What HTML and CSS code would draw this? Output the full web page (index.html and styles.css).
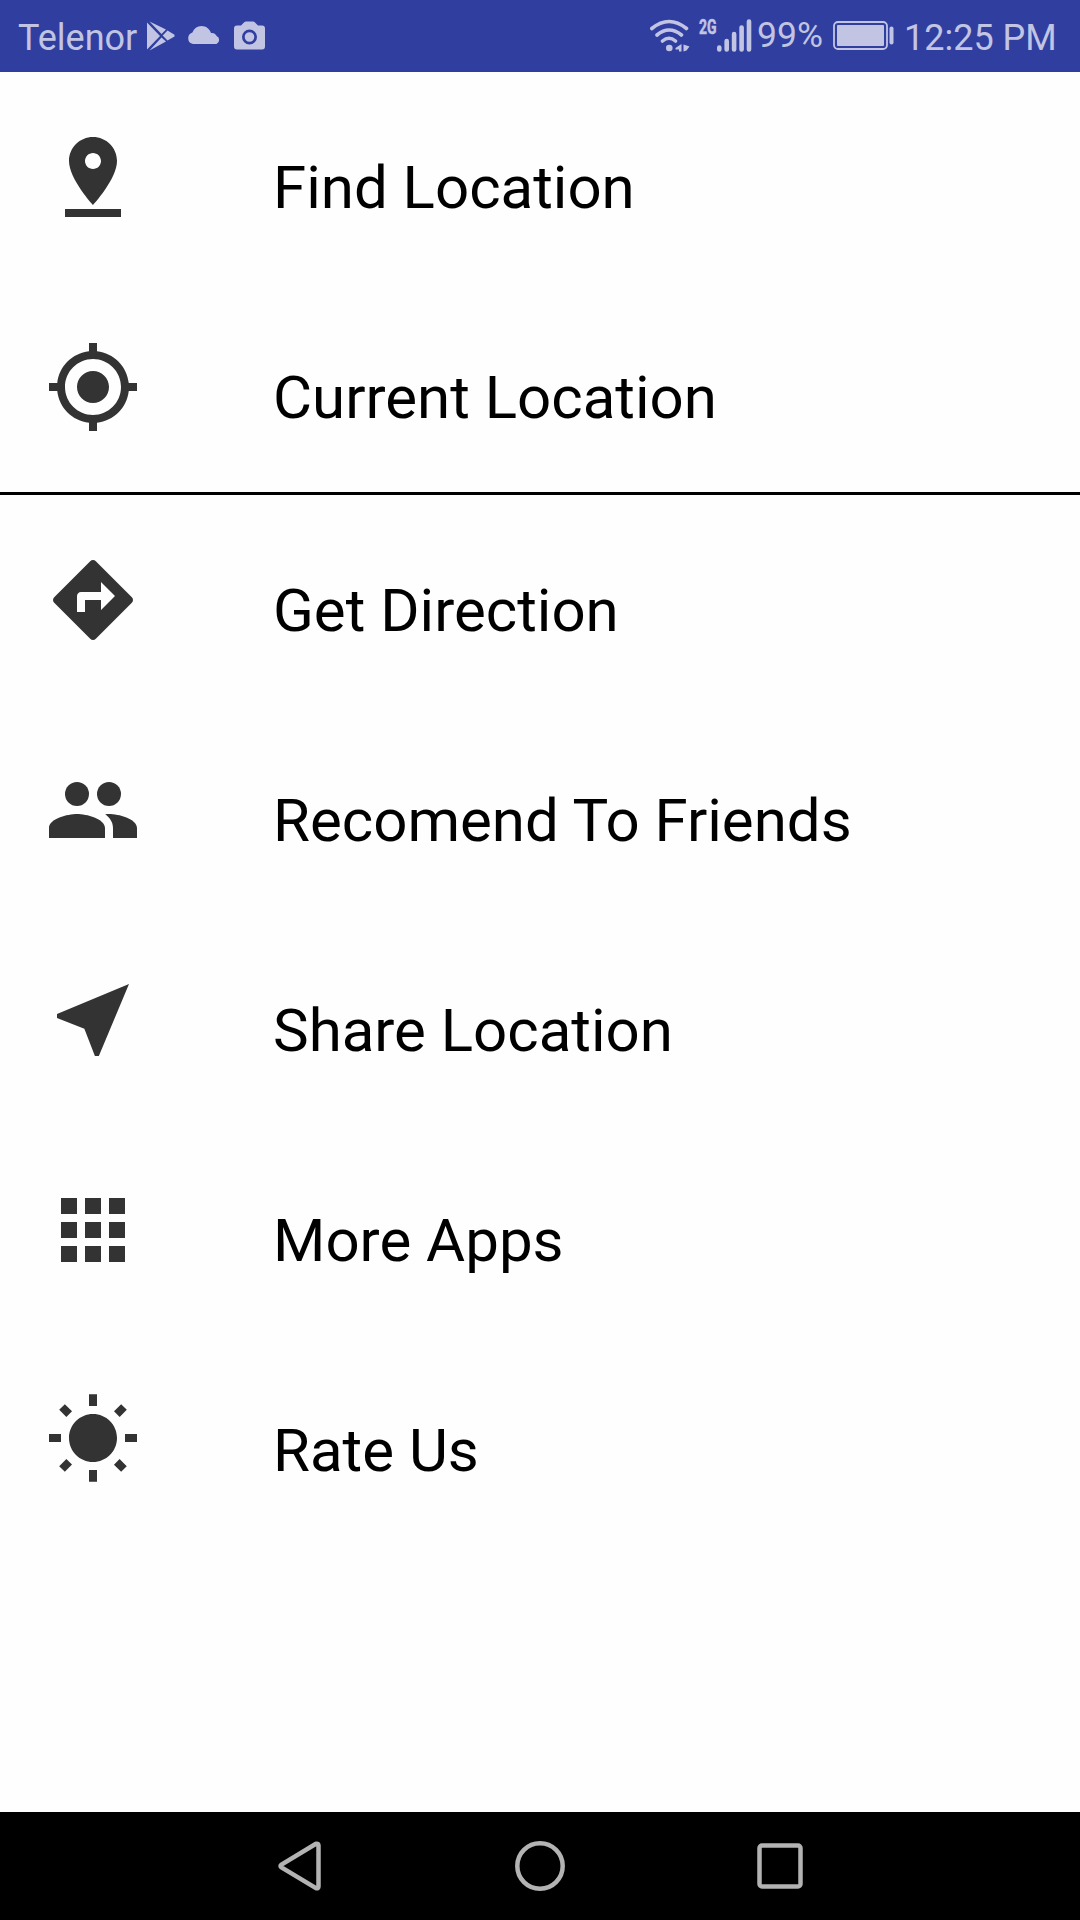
FILE: index.html
```
<!DOCTYPE html>
<html lang="en">
<head>
<meta charset="utf-8">
<title>Menu</title>
<link rel="stylesheet" href="styles.css">
</head>
<body>
<header class="status">
  <span class="carrier">Telenor</span>
  <svg class="ic-play" width="28" height="30" viewBox="0 0 28 30"><path d="M0 1.500V28.500L13 15ZM2.500 0.500L14.500 13 19 8.500ZM20.500 9.500L15.700 14.500 20.500 19.500 27.500 15.500V13.800ZM2.500 29.500L14.500 16.500 19 20.500Z"/></svg>
  <svg class="ic-cloud" width="34" height="20" viewBox="0 0 34 20"><path d="M6 19a6 6 0 0 1-.6-11.600A10 10 0 0 1 14.500 1c4.500 0 8.200 2.800 9.500 7l1-.1c2.500.1 4 1.300 4.600 3.200A4.300 4.300 0 0 1 29.500 19Z"/></svg>
  <svg class="ic-camera" width="31" height="29" viewBox="0 0 31 29"><path fill-rule="evenodd" d="M3 4.500H7L10 1.500Q11 .5 12 .5H19Q20 .5 21 1.500L24 4.500H28Q31 4.500 31 7.500V25.500Q31 28.500 28 28.500H3Q0 28.500 0 25.500V7.500Q0 4.500 3 4.500ZM15.500 8.500a7.500 7.500 0 1 0 0 15 7.500 7.500 0 0 0 0-15ZM15.500 11.200a4.800 4.800 0 1 1 0 9.600 4.800 4.800 0 0 1 0-9.600Z"/></svg>
  <svg class="ic-wifi" width="40" height="33" viewBox="0 0 40 33"><g fill="none" stroke="currentColor" stroke-width="3.600" stroke-linecap="round"><path d="M1.800 9.500Q19 -4.500 36.500 9.500M7 16Q19 6 31.500 16M12.500 22Q19 16.500 25.500 22"/></g><circle cx="19.300" cy="29" r="3.300"/><path d="M31.500 25V32.500H29V30.500H25.500V29ZM33.500 25.500L39.500 27.500 36.500 31.500 33.500 32.500Z"/></svg>
  <span class="net">2G</span>
  <svg class="ic-signal" width="35" height="33" viewBox="0 0 35 33"><g stroke="currentColor" stroke-width="4.600" stroke-linecap="round"><path d="M2.300 28.500V30.500M9.700 22V30.500M17.100 15V30.500M24.600 8.500V30.500M32 2.500V30.500"/></g></svg>
  <span class="percent">99%</span>
  <svg class="ic-battery" width="62" height="29" viewBox="0 0 62 29"><rect x="1" y="1" width="53" height="27" rx="4" fill="none" stroke="currentColor" stroke-width="1.800"/><rect x="4" y="4" width="47" height="21" rx="1"/><rect x="56.500" y="5.500" width="4" height="18" rx="2"/></svg>
  <span class="clock">12:25 PM</span>
</header>

<main class="menu">
  <div class="row">
    <svg class="icon" viewBox="0 0 24 24"><path d="M18 8c0-3.310-2.690-6-6-6S6 4.690 6 8c0 4.500 6 11 6 11s6-6.500 6-11zm-8 0c0-1.100.9-2 2-2s2 .9 2 2-.890 2-2 2c-1.100 0-2-.9-2-2zM5 20v2h14v-2H5z"/></svg>
    <span class="label">Find Location</span>
  </div>
  <div class="row">
    <svg class="icon" viewBox="0 0 24 24"><path d="M12 8c-2.210 0-4 1.790-4 4s1.790 4 4 4 4-1.790 4-4-1.790-4-4-4zm8.940 3c-.46-4.170-3.770-7.480-7.940-7.940V1h-2v2.060C6.830 3.520 3.520 6.830 3.060 11H1v2h2.060c.46 4.170 3.770 7.480 7.940 7.940V23h2v-2.060c4.170-.46 7.480-3.770 7.940-7.940H23v-2h-2.060zM12 19c-3.870 0-7-3.130-7-7s3.130-7 7-7 7 3.130 7 7-3.130 7-7 7z"/></svg>
    <span class="label">Current Location</span>
  </div>
  <div class="divider"></div>
  <div class="row">
    <svg class="icon" viewBox="0 0 24 24"><path d="M21.710 11.290l-9-9c-.39-.39-1.020-.39-1.410 0l-9 9c-.39.39-.39 1.020 0 1.410l9 9c.39.39 1.020.39 1.410 0l9-9c.39-.38.39-1.010 0-1.410zM14 14.500V12h-4v3H8v-4c0-.55.45-1 1-1h5V7.500l3.500 3.500-3.500 3.500z"/></svg>
    <span class="label">Get Direction</span>
  </div>
  <div class="row">
    <svg class="icon" viewBox="0 0 24 24"><circle cx="8" cy="8" r="3"/><circle cx="16" cy="8" r="3"/><path d="M8 13c-2.330 0-7 1.170-7 3.500V19h14v-2.500c0-2.330-4.670-3.500-7-3.500zm8 0c-.29 0-.62.020-.97.050 1.160.84 1.970 1.970 1.970 3.450V19h6v-2.500c0-2.330-4.670-3.500-7-3.500z"/></svg>
    <span class="label">Recomend To Friends</span>
  </div>
  <div class="row">
    <svg class="icon" viewBox="0 0 24 24"><path d="M21 3L3 10.530v.98l6.840 2.650L12.480 21h.98L21 3z"/></svg>
    <span class="label">Share Location</span>
  </div>
  <div class="row">
    <svg class="icon" viewBox="0 0 24 24"><path d="M4 8h4V4H4v4zm6 12h4v-4h-4v4zm-6 0h4v-4H4v4zm0-6h4v-4H4v4zm6 0h4v-4h-4v4zm6-10v4h4V4h-4zm-6 4h4V4h-4v4zm6 6h4v-4h-4v4zm0 6h4v-4h-4v4z"/></svg>
    <span class="label">More Apps</span>
  </div>
  <div class="row">
    <svg class="icon" viewBox="0 0 24 24"><path d="M6.760 4.840l-1.800-1.790-1.410 1.410 1.790 1.790 1.420-1.410zM4 10.500H1v2h3v-2zm9-9.950h-2V3.500h2V.55zm7.450 3.910l-1.410-1.410-1.790 1.790 1.410 1.410 1.790-1.790zm-3.210 13.700l1.790 1.800 1.410-1.410-1.800-1.790-1.400 1.400zM20 10.500v2h3v-2h-3zm-8-5c-3.310 0-6 2.690-6 6s2.690 6 6 6 6-2.690 6-6-2.690-6-6-6zm-1 16.950h2V19.500h-2v2.950zm-7.450-3.910l1.410 1.410 1.790-1.800-1.410-1.410-1.790 1.800z"/></svg>
    <span class="label">Rate Us</span>
  </div>
</main>

<nav class="navbar">
  <svg class="nav-icon" viewBox="0 0 60 60"><path d="M46 7.800L11.500 28.500Q9.500 30 11.500 31.500L46 52.200Q48.500 52.700 48.500 50.500V9.500Q48.500 7.300 46 7.800Z"/></svg>
  <svg class="nav-icon" viewBox="0 0 60 60"><circle cx="30" cy="30" r="22.700"/></svg>
  <svg class="nav-icon" viewBox="0 0 60 60"><rect x="9.500" y="9.500" width="41" height="41" rx="2.500"/></svg>
</nav>
</body>
</html>
```
FILE: styles.css
```
* { box-sizing: border-box; }

body {
  margin: 0;
  width: 1080px;
  height: 1920px;
  display: flex;
  flex-direction: column;
  background: #fefefe;
  font-family: Roboto, "Liberation Sans", sans-serif;
  overflow: hidden;
}

svg { display: block; flex: none; }

.status {
  height: 72px;
  flex: none;
  display: flex;
  align-items: flex-start;
  padding-left: 18px;
  background: #303f9f;
  color: #c1c5e3;
  font-size: 36px;
  line-height: 42px;
  white-space: nowrap;
}

.status svg { fill: currentColor; }

.carrier { width: 129px; padding-top: 17px; }
.ic-play { margin-top: 21px; }
.ic-cloud { margin: 25px 0 0 12px; }
.ic-camera { margin: 21px 0 0 13px; }
.ic-wifi { margin: 19px 0 0 385px; }
.net {
  width: 17px;
  margin: 15px 0 0 9px;
  font-size: 20px;
  font-weight: 700;
  line-height: 24px;
  -webkit-text-stroke: 0.5px currentColor;
  transform: scaleX(0.7);
  transform-origin: left;
}
.ic-signal { margin: 19px 0 0 1px; }
.percent { width: 75px; margin-left: 5px; padding-top: 14px; font-size: 35.5px; }
.ic-battery { margin: 21px 0 0 1px; }
.clock { margin-left: 9px; padding-top: 17px; }

.menu { flex: 1; }

.row {
  height: 210px;
  display: flex;
  align-items: flex-start;
  padding: 57px 0 0 45px;
}

.icon { width: 96px; height: 96px; fill: #333; }

.label {
  margin: 23px 0 0 132px;
  font-size: 60px;
  line-height: 72px;
  color: #000;
  white-space: nowrap;
}

.divider { height: 3px; background: #000; }

.navbar {
  height: 108px;
  flex: none;
  display: flex;
  justify-content: center;
  align-items: center;
  gap: 180px;
  background: #000;
}

.nav-icon {
  width: 60px;
  height: 60px;
  fill: none;
  stroke: #b3b3b3;
  stroke-width: 4.5;
  overflow: visible;
}
```
